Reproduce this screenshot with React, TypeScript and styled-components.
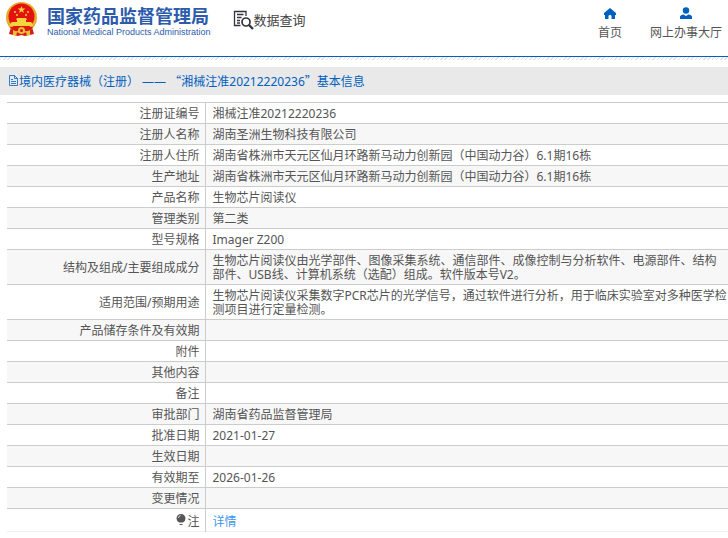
import React from 'react';
import styled, { createGlobalStyle } from 'styled-components';

const Global = createGlobalStyle`
  * { box-sizing: border-box; }
  body { margin: 0; background: #fff; color: #555; font: 12px/14px "Noto Sans", "Noto Sans CJK SC", sans-serif; }
  a { text-decoration: none; color: inherit; }
`;

const Header = styled.header`
  display: flex;
  align-items: flex-start;
  height: 57px;
  padding-left: 5px;
  border-bottom: 1px solid #0060bf;
`;
const Brand = styled.a`
  && { color: #2c5bab; }
  display: flex;
  gap: 9px;
  padding-top: 1px;
`;
const BrandText = styled.span`
  display: flex;
  flex-direction: column;
  padding-top: 3px;
  white-space: nowrap;
`;
const BrandName = styled.strong`
  font: 700 18px/22px "Noto Sans CJK SC", sans-serif;
`;
const BrandSub = styled.span`
  font: 9px/12px "Liberation Sans", sans-serif;
`;
const Query = styled.a`
  && { color: #444; }
  display: flex;
  align-items: center;
  margin-left: 22px;
  padding-top: 9px;
  font: 13px/22px "Noto Sans CJK SC", sans-serif;
  white-space: nowrap;
`;
const Nav = styled.nav`
  display: flex;
  gap: 28px;
  margin-left: auto;
  padding: 7px 6px 0 0;
`;
const NavLink = styled.a`
  display: flex;
  flex-direction: column;
  align-items: center;
  gap: 5px;
  white-space: nowrap;
  svg { display: block; }
`;
const Hatch = styled.div`
  height: 3px;
  margin-bottom: 7px;
  background: repeating-linear-gradient(135deg, #fff 0 1px, #e2e2e6 1px 2px, #fff 2px 3px);
`;
const Title = styled.h1`
  display: flex;
  align-items: center;
  margin: 0;
  padding: 0 8px;
  height: 28px;
  background: #e9e9e9;
  color: #0060bf;
  font-size: 12px;
  font-weight: 400;
  white-space: pre;
`;
const Quote = styled.span`
  font-family: "Noto Sans CJK SC", sans-serif;
`;
const Main = styled.main`
  padding: 7px 0 0 7px;
`;
const Table = styled.table`
  width: 100%;
  border-collapse: collapse;
  border-top: 1px solid #ccc;
`;
const Row = styled.tr`
  border-bottom: 1px solid #ccc;
  &:nth-child(even) { background: #f7f7f7; }
  &:last-child { border-bottom-color: #eee; }
`;
const Label = styled.th`
  width: 198px;
  padding: 4px 5px 2px;
  border-right: 1px solid #ccc;
  font-weight: 400;
  text-align: right;
`;
const Value = styled.td`
  padding: 4px 0 2px 7px;
`;
const Detail = styled.a`
  display: block;
  padding: 2px 0 0;
  && { color: #3e97ee; }
`;

const Emblem = () => (
  <svg width="33" height="37" viewBox="0 0 33 37" aria-hidden="true">
    <path d="M6 26 4 33l9 2 3.500-1 3.500 1 9-2-2-7z" fill="#d71b16" />
    <circle cx="16.5" cy="16.5" r="15.5" fill="#e7ac2c" />
    <circle cx="16.5" cy="15.5" r="13" fill="#e3120f" />
    <path d="m16.5 5 1 2.600h2.800l-2.200 1.600.8 2.700-2.400-1.600-2.400 1.600.8-2.700-2.200-1.600h2.800z" fill="#f8d33c" />
    <g fill="#f8d33c">
      <circle cx="10" cy="11" r="1" /><circle cx="23" cy="11" r="1" />
      <circle cx="12" cy="14" r="1" /><circle cx="21" cy="14" r="1" />
      <path d="M12 17h9l1 2H11zM12 19h9v2h5l2 2v2H5v-2l2-2h5z" />
    </g>
    <path d="M5 26h23l-3 4H8z" fill="#d71b16" />
    <circle cx="16.500" cy="29.500" r="3.500" fill="#f1bd32" />
    <circle cx="16.500" cy="29.500" r="1.500" fill="#d71b16" />
    <path d="m8 29 4 2-1 4-3-1zM25 29l-4 2 1 4 3-1z" fill="#f1bd32" />
  </svg>
);
const QueryIcon = () => (
  <svg width="21" height="20" viewBox="0 0 21 20" fill="none" stroke="#33333f" aria-hidden="true">
    <path d="M13 6V1.500H1.500v14h6M4 4.500h6.500M4 7.500h4.500M4 10.500h3M4 13h3" strokeWidth="1.300" />
    <circle cx="13" cy="12" r="4" strokeWidth="1.700" />
    <path d="m16 15 4 4" strokeWidth="2.400" />
  </svg>
);
const HomeIcon = () => (
  <svg width="14" height="14" viewBox="0 0 14 14" fill="#0060bf" aria-hidden="true">
    <path d="M7 1 1 6v2h1v4h3.500V9q0-1 1.500-1t1.500 1v3H12V8h1V6z" />
  </svg>
);
const UserIcon = () => (
  <svg width="14" height="14" viewBox="0 0 14 14" fill="#0060bf" aria-hidden="true">
    <circle cx="7" cy="3.500" r="3.200" />
    <path d="M1 12v-2q0-2 3.500-2.500L7 9l2.500-1.500Q13 8 13 10v2z" />
  </svg>
);
const DocIcon = () => (
  <svg width="11" height="12" viewBox="0 0 11 12" fill="none" stroke="#0060bf" aria-hidden="true">
    <path d="M1.500.500h5l3 3v7h-8zM6.500.500v3h3M3 4.500h2M3 6.500h5M3 8.500h5" strokeWidth=".8" />
  </svg>
);
const BulbIcon = () => (
  <svg width="11" height="12" viewBox="0 0 11 12" aria-hidden="true">
    <path d="M5 0a4.500 4.500 0 0 1 4.500 4.500q0 2-2.500 4H3Q.500 6.500.500 4.500A4.500 4.500 0 0 1 5 0zM3.500 10h3v1h-3z" fill="#555" />
    <path d="M2.500 4q0-2 2-2.500" stroke="#ddd" fill="none" />
  </svg>
);

const rows: [string, string][] = [
  ['注册证编号', '湘械注准20212220236'],
  ['注册人名称', '湖南圣洲生物科技有限公司'],
  ['注册人住所', '湖南省株洲市天元区仙月环路新马动力创新园（中国动力谷）6.1期16栋'],
  ['生产地址', '湖南省株洲市天元区仙月环路新马动力创新园（中国动力谷）6.1期16栋'],
  ['产品名称', '生物芯片阅读仪'],
  ['管理类别', '第二类'],
  ['型号规格', 'Imager Z200'],
  ['结构及组成/主要组成成分', '生物芯片阅读仪由光学部件、图像采集系统、通信部件、成像控制与分析软件、电源部件、结构部件、USB线、计算机系统（选配）组成。软件版本号V2。'],
  ['适用范围/预期用途', '生物芯片阅读仪采集数字PCR芯片的光学信号，通过软件进行分析，用于临床实验室对多种医学检测项目进行定量检测。'],
  ['产品储存条件及有效期', ''],
  ['附件', ''],
  ['其他内容', ''],
  ['备注', ''],
  ['审批部门', '湖南省药品监督管理局'],
  ['批准日期', '2021-01-27'],
  ['生效日期', ''],
  ['有效期至', '2026-01-26'],
  ['变更情况', ''],
];

export default function App() {
  return (
    <div lang="zh-CN">
      <Global />
      <Header>
        <Brand href="#">
          <Emblem />
          <BrandText>
            <BrandName>国家药品监督管理局</BrandName>
            <BrandSub>National Medical Products Administration</BrandSub>
          </BrandText>
        </Brand>
        <Query href="#"><QueryIcon />数据查询</Query>
        <Nav>
          <NavLink href="#"><HomeIcon />首页</NavLink>
          <NavLink href="#"><UserIcon />网上办事大厅</NavLink>
        </Nav>
      </Header>
      <Hatch />
      <Title>
        <DocIcon />
        <span>境内医疗器械（注册） —— <Quote>“</Quote>湘械注准20212220236<Quote>”</Quote>基本信息</span>
      </Title>
      <Main>
        <Table>
          <tbody>
            {rows.map(([label, value]) => (
              <Row key={label}>
                <Label scope="row">{label}</Label>
                <Value>{value}</Value>
              </Row>
            ))}
            <Row>
              <Label scope="row"><BulbIcon />注</Label>
              <Value><Detail href="#">详情</Detail></Value>
            </Row>
          </tbody>
        </Table>
      </Main>
    </div>
  );
}
